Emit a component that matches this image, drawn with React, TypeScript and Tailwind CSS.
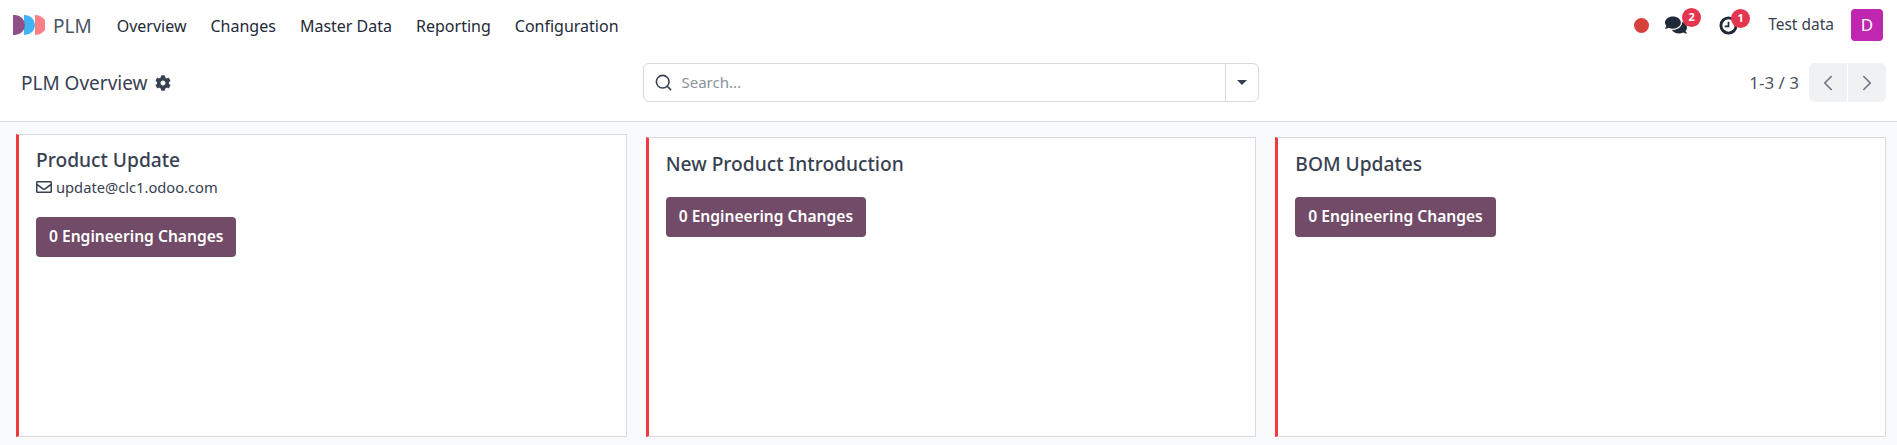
import { ChevronLeft, ChevronRight, Search } from 'lucide-react';
import { FaCog, FaComments, FaRegEnvelope } from 'react-icons/fa';
import clsx from 'clsx';

const menus = ['Overview', 'Changes', 'Master Data', 'Reporting', 'Configuration'];

const cards = [
  { title: 'Product Update', email: 'update@clc1.odoo.com' },
  { title: 'New Product Introduction' },
  { title: 'BOM Updates' },
];

function Logo() {
  return (
    <svg width="32" height="22" viewBox="0 0 32 22" className="shrink-0">
      <path d="M22 1h1a10 10 0 0 1 0 20h-1z" fill="#fd8087" />
      <path d="M11 1h1a10 10 0 0 1 0 20h-1z" fill="#3fb4f6" />
      <path d="M22 2.5a10 10 0 0 1 0 17a10 10 0 0 0 0-17z" fill="#2b7fc4" />
      <path d="M0 1h2a10 10 0 0 1 0 20H0z" fill="#8f4f87" />
      <path d="M11 2.5a10 10 0 0 1 0 17a10 10 0 0 0 0-17z" fill="#24508f" />
    </svg>
  );
}

function Badge({ value, className }: { value: number; className: string }) {
  return (
    <span className={clsx('absolute flex h-[19px] w-[19px] items-center justify-center rounded-full bg-[#e4364e] text-[11px] font-bold text-white', className)}>
      {value}
    </span>
  );
}

export default function App() {
  return (
    <div className="flex h-[445px] flex-col overflow-hidden bg-[#f9fafb] font-['Noto_Sans',sans-serif] text-[#374151]">
      {/* Top bar */}
      <div className="flex h-[50px] shrink-0 items-center bg-white pl-[13px] pr-[14px]">
        <Logo />
        <span className="ml-[8px] pt-[2px] text-[19px] text-[#4b5563]">PLM</span>
        <nav className="ml-[13px] flex pt-[2px]">
          {menus.map((m) => (
            <span key={m} className="px-[12px] text-[16px] text-[#1f2937]">{m}</span>
          ))}
        </nav>
        <div className="ml-auto flex items-center">
          <span className="h-[15px] w-[15px] rounded-full bg-[#d5403b]" />
          <span className="relative ml-[16px] text-[#1f2937]">
            <FaComments size={22} />
            <Badge value={2} className="-right-[14px] -top-[6px]" />
          </span>
          <span className="relative ml-[32px] text-[#1f2937]">
            <svg width="19" height="19" viewBox="0 0 20 20" fill="none" stroke="currentColor" className="block">
              <circle cx="10" cy="10" r="8" strokeWidth="3" />
              <path d="M10 6v5H6" strokeWidth="1.8" />
            </svg>
            <Badge value={1} className="-right-[12px] -top-[7px]" />
          </span>
          <span className="ml-[30px] text-[15.5px] text-[#374151]">Test data</span>
          <span className="ml-[17px] flex h-[32px] w-[32px] items-center justify-center rounded-[4px] bg-[#c026b0] text-[17px] text-white">D</span>
        </div>
      </div>

      {/* Control panel */}
      <div className="grid h-[72px] shrink-0 grid-cols-[1fr_616px_1fr] items-center border-b border-[#d8dadd] bg-white pb-[6px] pl-[21px] pr-[11px]">
        <div className="flex items-center gap-[7px] pt-px">
          <span className="text-[19px] text-[#374151]">PLM Overview</span>
          <FaCog size={16} />
        </div>
        <div className="-ml-[3px] flex h-[39px] w-[616px] items-center rounded-[6px] border border-[#d8dadd]">
          <div className="flex flex-1 items-center pl-[10px]">
            <Search size={19} strokeWidth={2} className="text-[#374151]" />
            <span className="ml-[9px] text-[15px] text-[#8b929c]">Search...</span>
          </div>
          <div className="flex h-full w-[33px] items-center justify-center border-l border-[#d8dadd]">
            <span className="h-0 w-0 border-x-[5px] border-t-[5px] border-x-transparent border-t-[#374151]" />
          </div>
        </div>
        <div className="flex items-center justify-end">
          <span className="text-[17px] text-[#4b5563]">1-3 / 3</span>
          <div className="ml-[10px] flex h-[39px] gap-px">
            <span className="flex w-[38px] items-center justify-center rounded-l-[6px] bg-[#f0f1f3]">
              <ChevronLeft size={26} strokeWidth={1.5} className="text-[#6b7280]" />
            </span>
            <span className="flex w-[38px] items-center justify-center rounded-r-[6px] bg-[#f0f1f3]">
              <ChevronRight size={26} strokeWidth={1.5} className="text-[#6b7280]" />
            </span>
          </div>
        </div>
      </div>

      {/* Cards */}
      <div className="grid flex-1 grid-cols-3 gap-[19px] pb-[8px] pl-[16px] pr-[11px] pt-[12px]">
        {cards.map((c, i) => (
          <div
            key={c.title}
            className={clsx(
              'border border-l-[3px] border-[#d8dadd] border-l-[#f03a3f] bg-white pl-[17px]',
              i === 0 ? 'pt-[12px]' : 'mt-[3px] pt-[13px]',
            )}
          >
            <h3 className="text-[19.2px] font-medium leading-[26px] text-[#374151]">{c.title}</h3>
            {c.email ? (
              <div className="mt-[4px] flex items-center gap-[4px] text-[14.7px] leading-[20px] text-[#374151]">
                <FaRegEnvelope size={16} />
                {c.email}
              </div>
            ) : null}
            <button
              type="button"
              className="mt-[20px] block h-[40px] rounded-[4px] bg-[#714b67] px-[13px] text-[15.6px] font-semibold text-white"
            >
              0 Engineering Changes
            </button>
          </div>
        ))}
      </div>
    </div>
  );
}
